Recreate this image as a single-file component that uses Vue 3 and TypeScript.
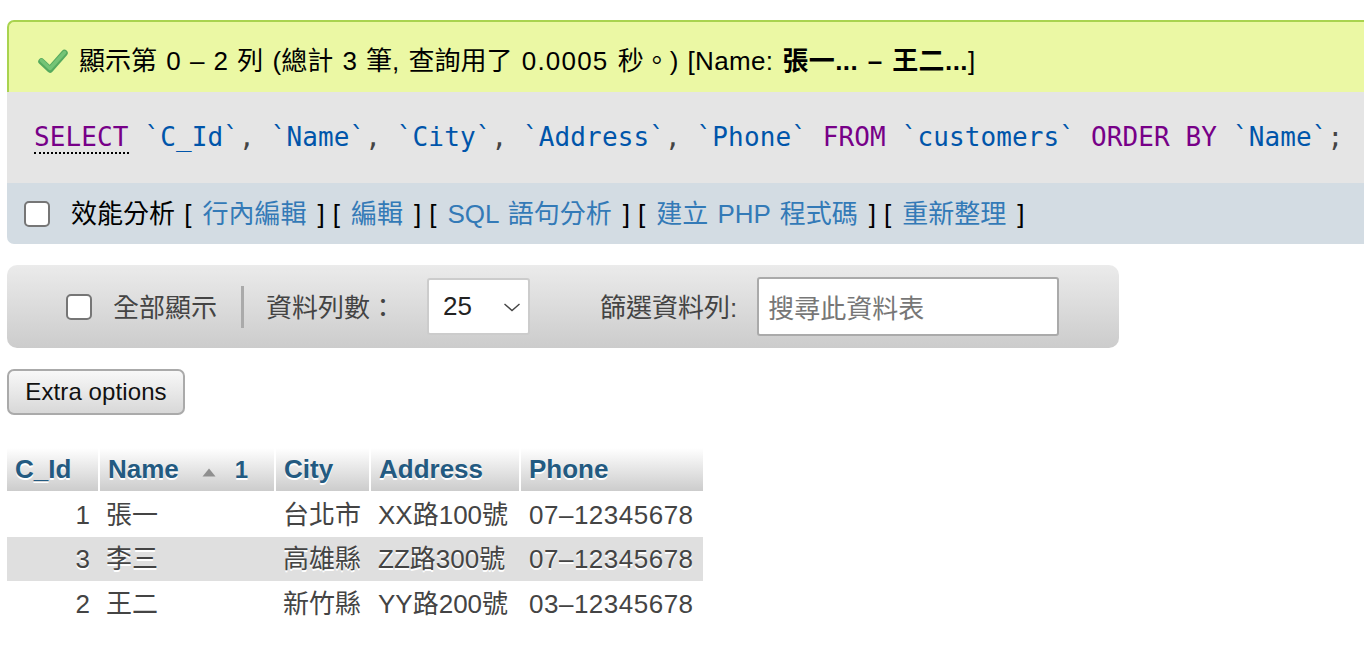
<script setup lang="ts">
interface Row { id: number; name: string; city: string; addr: string; phone: string }
const rows: Row[] = [
  { id: 1, name: '張一', city: '台北市', addr: 'XX路100號', phone: '07–12345678' },
  { id: 3, name: '李三', city: '高雄縣', addr: 'ZZ路300號', phone: '07–12345678' },
  { id: 2, name: '王二', city: '新竹縣', addr: 'YY路200號', phone: '03–12345678' },
]
const links = ['行內編輯', '編輯', 'SQL 語句分析', '建立 PHP 程式碼', '重新整理']
</script>

<template>
  <div class="page">
    <div class="notice">
      <svg class="check" width="30" height="24" viewBox="0 0 30 24">
        <path d="M3.5 12.5 L12 20.5 L26.5 4" fill="none" stroke="#55aa5e" stroke-width="6.5" stroke-linecap="round" stroke-linejoin="round" />
        <path d="M3.5 11.5 L12 19.5 L26.5 3.5" fill="none" stroke="#74c476" stroke-width="3.5" stroke-linecap="round" stroke-linejoin="round" />
      </svg>
      <span>顯示第 0 – 2 列 (總計 3 筆, 查詢用了 <span class="wide">0.0005</span> 秒。) <span class="soft">[Name:</span> <b>張一... – 王二...</b>]</span>
    </div>
    <div class="sql">
      <span class="kw abbr">SELECT</span> <span class="id">`C_Id`</span><span class="pn">,</span> <span class="id">`Name`</span><span class="pn">,</span> <span class="id">`City`</span><span class="pn">,</span> <span class="id">`Address`</span><span class="pn">,</span> <span class="id">`Phone`</span> <span class="kw">FROM</span> <span class="id">`customers`</span> <span class="kw">ORDER BY</span> <span class="id">`Name`</span><span class="pn">;</span>
    </div>
    <div class="tools">
      <span class="box tool-box"></span>
      <span class="tool-text">效能分析 <span v-for="l in links" :key="l" class="action">[<a>{{ l }}</a>]</span></span>
    </div>
    <div class="nav">
      <span class="box nav-box"></span>
      <span class="nav-all nudge">全部顯示</span>
      <span class="nav-sep"></span>
      <span class="nav-rows nudge">資料列數：</span>
      <span class="select">
        <span>25</span>
        <svg width="18" height="10" viewBox="0 0 18 10"><path d="M1.5 2 L9 8.5 L16.5 2" fill="none" stroke="#444" stroke-width="1.4" /></svg>
      </span>
      <span class="nav-filter nudge">篩選資料列:</span>
      <span class="search">搜尋此資料表</span>
    </div>
    <button class="extra" type="button">Extra options</button>
    <table class="grid">
      <thead>
        <tr>
          <th class="c1">C_Id</th>
          <th class="c2">
            <span class="th-name">Name<svg width="14" height="9" viewBox="0 0 14 9"><path d="M7 0.5 L13.5 8.5 L0.5 8.5 Z" fill="#8f8f8f" /></svg><i>1</i></span>
          </th>
          <th class="c3">City</th>
          <th class="c4">Address</th>
          <th class="c5">Phone</th>
        </tr>
      </thead>
      <tbody>
        <tr v-for="r in rows" :key="r.id">
          <td class="num">{{ r.id }}</td>
          <td>{{ r.name }}</td>
          <td>{{ r.city }}</td>
          <td>{{ r.addr }}</td>
          <td class="phone">{{ r.phone }}</td>
        </tr>
      </tbody>
    </table>
  </div>
</template>

<style>
html, body { margin: 0; background: #fff; overflow: hidden; }
</style>

<style scoped>
.page {
  width: 1364px;
  height: 652px;
  overflow: hidden;
  padding: 20px 0 0 7px;
  box-sizing: border-box;
  font-family: "Liberation Sans", "Noto Sans CJK TC", sans-serif;
  font-size: 26px;
  color: #444;
}
.notice {
  height: 72px;
  box-sizing: border-box;
  border: 2px solid #a9d34f;
  border-right: 0;
  border-bottom: 0;
  border-top-left-radius: 7px;
  background: #ebf8a4;
  display: flex;
  align-items: center;
  padding: 2px 0 0 29px;
  color: #000;
  white-space: nowrap;
  font-size: 26px;
  word-spacing: 2px;
}
.wide { letter-spacing: 1.2px; }
.soft { letter-spacing: 0.3px; }
.check { margin-right: 11px; margin-top: 6px; flex: none; }
.notice b { font-weight: 700; letter-spacing: 0.4px; }
.sql {
  height: 91px;
  background: #e5e5e5;
  box-sizing: border-box;
  padding: 30px 0 0 27px;
  font-family: "DejaVu Sans Mono", monospace;
  font-size: 26px;
  line-height: 30px;
  letter-spacing: 0.12px;
  white-space: nowrap;
  color: #444;
}
.kw { color: #770088; }
.abbr { border-bottom: 2px dotted #000; padding-bottom: 0; }
.id { color: #0055aa; }
.pn { color: #444; }
.tools {
  height: 61px;
  background: #d3dce3;
  border-bottom-left-radius: 7px;
  display: flex;
  align-items: center;
  white-space: nowrap;
  color: #000;
  padding-left: 17px;
  word-spacing: 2px;
}
.box {
  width: 26px;
  height: 26px;
  box-sizing: border-box;
  background: #fff;
  border: 2px solid #767676;
  border-radius: 5px;
  flex: none;
  display: block;
}
.tool-box { margin-right: 21px; }
.tool-text { margin-bottom: 4px; }
.action + .action { margin-left: 8px; }
.tool-text a { color: #337ab7; margin: 0 11px; }
.nav {
  margin-top: 21px;
  width: 1112px;
  height: 83px;
  border-radius: 10px;
  background: linear-gradient(#ebebeb, #cccccc);
  display: flex;
  align-items: center;
  box-sizing: border-box;
  padding-left: 59px;
  white-space: nowrap;
}
.nudge { margin-bottom: 2px; }
.nav-all { margin-left: 21px; }
.nav-sep { width: 3px; height: 42px; background: #aaa; margin: 0 22px 0 24px; }
.select {
  margin-left: 31px;
  width: 103px;
  height: 57px;
  box-sizing: border-box;
  background: #fff;
  border: 2px solid #ccc;
  border-radius: 3px;
  display: flex;
  align-items: center;
  justify-content: space-between;
  padding: 0 7px 0 14px;
  color: #222;
}
.nav-filter { margin-left: 70px; }
.search {
  margin-left: 20px;
  width: 302px;
  height: 59px;
  box-sizing: border-box;
  background: #fff;
  border: 2px solid #aaa;
  border-radius: 3px;
  display: flex;
  align-items: center;
  padding-left: 9px;
  color: #777;
}
.extra {
  display: block;
  margin-top: 21px;
  width: 178px;
  height: 46px;
  padding: 0;
  background: linear-gradient(#f8f8f8, #d8d8d8);
  border: 2px solid #aaa;
  border-radius: 7px;
  font: inherit;
  font-size: 24px;
  letter-spacing: 0.1px;
  color: #111;
}
.grid {
  margin-top: 33px;
  border-collapse: separate;
  border-spacing: 0;
  table-layout: fixed;
  width: 696px;
}
th {
  height: 43px;
  padding: 0 0 0 8px;
  text-align: left;
  box-sizing: border-box;
  font-weight: 700;
  color: #235a81;
  background: linear-gradient(#fff, #cccccc);
  border-left: 2px solid #fff;
  text-shadow: 0 2px 0 #fff;
}
th:first-child { border-left: 0; }
.c1 { width: 91px; }
.c2 { width: 176px; }
.c3 { width: 95px; }
.c4 { width: 150px; }
.c5 { width: 184px; }
.th-name { display: flex; align-items: center; }
.th-name svg { margin: 6px 0 0 23px; }
.th-name i { font-style: normal; margin-left: 19px; font-size: 24px; }
td {
  height: 45px;
  padding: 0 8px;
  box-sizing: border-box;
  white-space: nowrap;
  overflow: visible;
  color: #444;
  line-height: 30px;
}
td.num { text-align: right; }
td.phone { padding-left: 10px; letter-spacing: 0.5px; }
tbody tr:nth-child(1) td { height: 46px; padding-top: 2px; }
tbody tr:nth-child(2) td { height: 44px; background: #dfdfdf; text-shadow: 0 2px 0 #fff; }
tbody td:nth-child(3), tbody td:nth-child(4) { padding-left: 9px; }
</style>
